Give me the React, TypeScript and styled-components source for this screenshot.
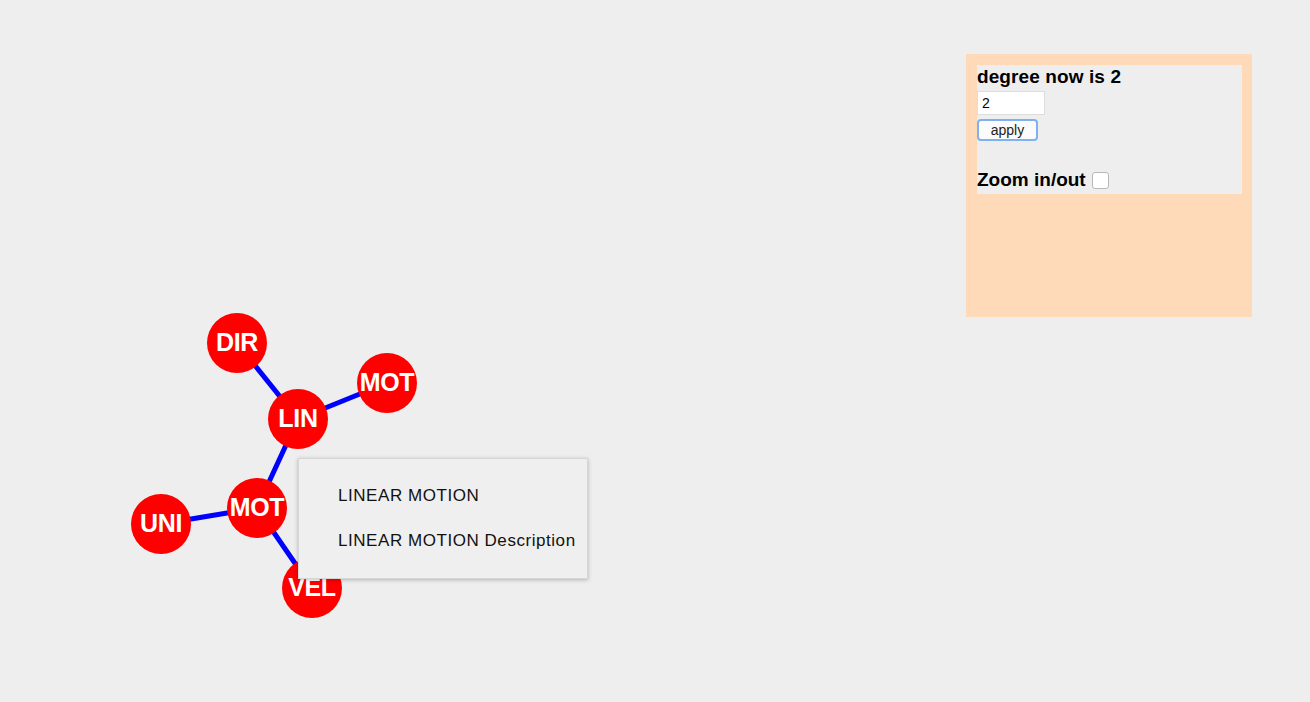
import styled, { createGlobalStyle } from 'styled-components';

type GraphNode = { id: string; label: string; x: number; y: number };

const nodes: GraphNode[] = [
  { id: 'dir', label: 'DIR', x: 237, y: 343 },
  { id: 'mot1', label: 'MOT', x: 387, y: 383 },
  { id: 'lin', label: 'LIN', x: 298, y: 419 },
  { id: 'mot2', label: 'MOT', x: 257, y: 508 },
  { id: 'uni', label: 'UNI', x: 161, y: 524 },
  { id: 'vel', label: 'VEL', x: 312, y: 588 },
];

const links: [string, string][] = [
  ['lin', 'dir'],
  ['lin', 'mot1'],
  ['lin', 'mot2'],
  ['mot2', 'uni'],
  ['mot2', 'vel'],
];

const GlobalStyle = createGlobalStyle`
  html, body {
    margin: 0;
    padding: 0;
    background: #eeeeee;
  }
  body {
    font-family: "Liberation Sans", Arial, sans-serif;
  }
`;

const Page = styled.div`
  position: relative;
  width: 1310px;
  height: 702px;
  overflow: hidden;
  display: flex;
  justify-content: flex-end;
  align-items: flex-start;
  padding: 54px 58px 0 0;
  box-sizing: border-box;
`;

const Canvas = styled.svg`
  position: absolute;
  left: 0;
  top: 0;
`;

const NodeLabel = styled.text`
  font-family: "Liberation Sans", Arial, sans-serif;
  font-weight: bold;
  font-size: 25px;
  fill: #ffffff;
  letter-spacing: -0.3px;
`;

const Controls = styled.div`
  position: relative;
  width: 286px;
  height: 263px;
  background: #ffdab9;
  padding: 11px 10px 0 11px;
  box-sizing: border-box;
`;

const ControlBox = styled.div`
  background: #eeeeee;
  height: 129px;
  display: flex;
  flex-direction: column;
  align-items: flex-start;
`;

const Title = styled.div`
  font-weight: bold;
  font-size: 19px;
  line-height: 24px;
  letter-spacing: 0.1px;
  color: #000;
`;

const DegreeInput = styled.input`
  margin: 2px 0 0;
  width: 68px;
  height: 24px;
  box-sizing: border-box;
  border: 1px solid #dedede;
  background: #fff;
  font-family: "Liberation Sans", Arial, sans-serif;
  font-size: 14px;
  padding: 2px 4px;
  outline: none;
`;

const ApplyButton = styled.button`
  margin-top: 4px;
  width: 61px;
  height: 22px;
  box-sizing: border-box;
  border: 2px solid #7fb0f0;
  border-radius: 4px;
  background: #fbfbfb;
  font-family: "Liberation Sans", Arial, sans-serif;
  font-size: 14px;
  color: #222;
  padding: 0;
`;

const ZoomRow = styled.label`
  margin-top: 27px;
  display: flex;
  align-items: center;
  font-weight: bold;
  font-size: 19px;
  line-height: 24px;
`;

const ZoomCheck = styled.span`
  display: inline-block;
  width: 15px;
  height: 15px;
  margin-left: 6px;
  margin-top: 1px;
  border: 1px solid #b8b8b8;
  border-radius: 3px;
  background: #fff;
`;

const Tooltip = styled.div`
  position: absolute;
  left: 298px;
  top: 458px;
  width: 290px;
  height: 121px;
  box-sizing: border-box;
  background: #efefef;
  border: 1px solid #d6d6d6;
  box-shadow: 0 1px 4px rgba(0, 0, 0, 0.25);
  padding: 26px 0 0 39px;
  display: flex;
  flex-direction: column;
  gap: 23px;
`;

const TipLine = styled.div`
  font-size: 17px;
  line-height: 22px;
  letter-spacing: 0.55px;
  color: #111;
  white-space: nowrap;
`;

function Graph() {
  const byId = Object.fromEntries(nodes.map((n) => [n.id, n]));
  return (
    <Canvas width={1310} height={702}>
      {links.map(([a, b]) => (
        <line
          key={a + b}
          x1={byId[a].x}
          y1={byId[a].y}
          x2={byId[b].x}
          y2={byId[b].y}
          stroke="#0000ff"
          strokeWidth={5}
        />
      ))}
      {nodes.map((n) => (
        <g key={n.id}>
          <circle cx={n.x} cy={n.y} r={30} fill="#ff0000" />
          <NodeLabel x={n.x} y={n.y + 8} textAnchor="middle">
            {n.label}
          </NodeLabel>
        </g>
      ))}
    </Canvas>
  );
}

export default function App() {
  return (
    <>
      <GlobalStyle />
      <Page>
        <Graph />
        <Controls>
          <ControlBox>
            <Title>degree now is 2</Title>
            <DegreeInput defaultValue="2" />
            <ApplyButton>apply</ApplyButton>
            <ZoomRow>
              Zoom in/out
              <ZoomCheck />
            </ZoomRow>
          </ControlBox>
        </Controls>
        <Tooltip>
          <TipLine>LINEAR MOTION</TipLine>
          <TipLine>LINEAR MOTION Description</TipLine>
        </Tooltip>
      </Page>
    </>
  );
}
